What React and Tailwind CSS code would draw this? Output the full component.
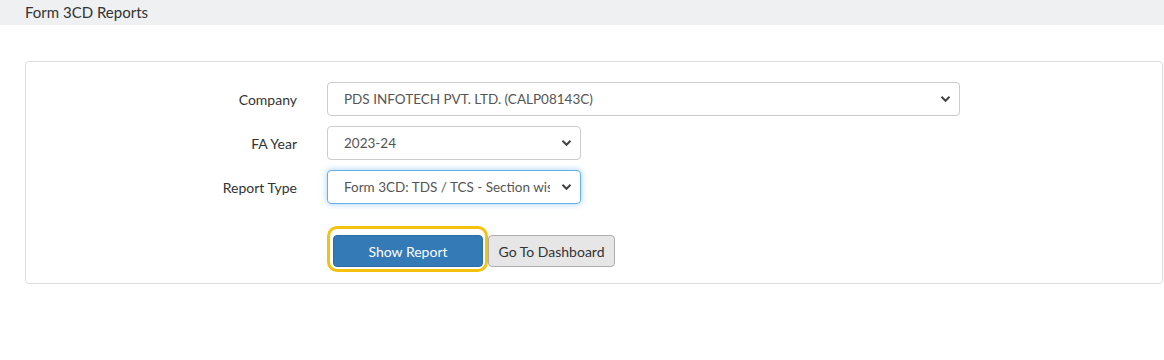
const Chevron = () => (
    <svg className="pointer-events-none absolute right-[9px] top-1/2 -translate-y-1/2" width="11" height="8" viewBox="0 0 11 8">
        <path d="M1.5 1.8 L5.5 5.8 L9.5 1.8" fill="none" stroke="#444" strokeWidth="2" />
    </svg>
)

const SelectBox = ({ value, width, focused }) => (
    <div className={`relative ${width}`}>
        <select
            defaultValue={value}
            className={`h-[34px] w-full appearance-none rounded-[4px] border bg-white pl-[16px] pr-[30px] text-[13.5px] text-[#555] outline-none ${
                focused ? "border-[#66afe9] shadow-[0_0_6px_rgba(102,175,233,0.6)]" : "border-[#ccc]"
            }`}
        >
            <option>{value}</option>
        </select>
        <Chevron />
    </div>
)

const Row = ({ label, children }) => (
    <div className="flex items-center">
        <div className="w-[271px] text-right text-[14px] text-[#333]">{label}</div>
        <div className="ml-[30px]">{children}</div>
    </div>
)

const App = () => {
    return (
        <div className="h-[360px] w-[1164px] bg-white font-['Lato',sans-serif]">
            <div className="h-[25px] bg-[#eef0f2] pl-[25px] text-[15px] leading-[24px] text-[#333]">
                Form 3CD Reports
            </div>

            <div className="ml-[25px] mr-[1px] mt-[36px] rounded-[4px] border border-[#ddd] pb-[16px] pt-[20px]">
                <div className="flex flex-col gap-[10px]">
                    <Row label="Company">
                        <SelectBox value="PDS INFOTECH PVT. LTD. (CALP08143C)" width="w-[633px]" />
                    </Row>
                    <Row label="FA Year">
                        <SelectBox value="2023-24" width="w-[254px]" />
                    </Row>
                    <Row label="Report Type">
                        <SelectBox value="Form 3CD: TDS / TCS - Section wise" width="w-[254px]" focused />
                    </Row>
                </div>

                <div className="mt-[31px] flex gap-[5px] pl-[307px]">
                    <div className="relative">
                        <button className="h-[32px] w-[150px] rounded-[4px] border border-[#2e6da4] bg-[#337ab7] text-[14px] text-white">
                            Show Report
                        </button>
                        <div className="pointer-events-none absolute -bottom-[5px] -left-[6px] -right-[5px] -top-[9px] rounded-[10px] border-[3px] border-[#f4c20d]" />
                    </div>
                    <button className="h-[32px] w-[127px] rounded-[4px] border border-[#adadad] bg-[#e6e6e6] text-[14px] text-[#333]">
                        Go To Dashboard
                    </button>
                </div>
            </div>
        </div>
    )
}

export default App
